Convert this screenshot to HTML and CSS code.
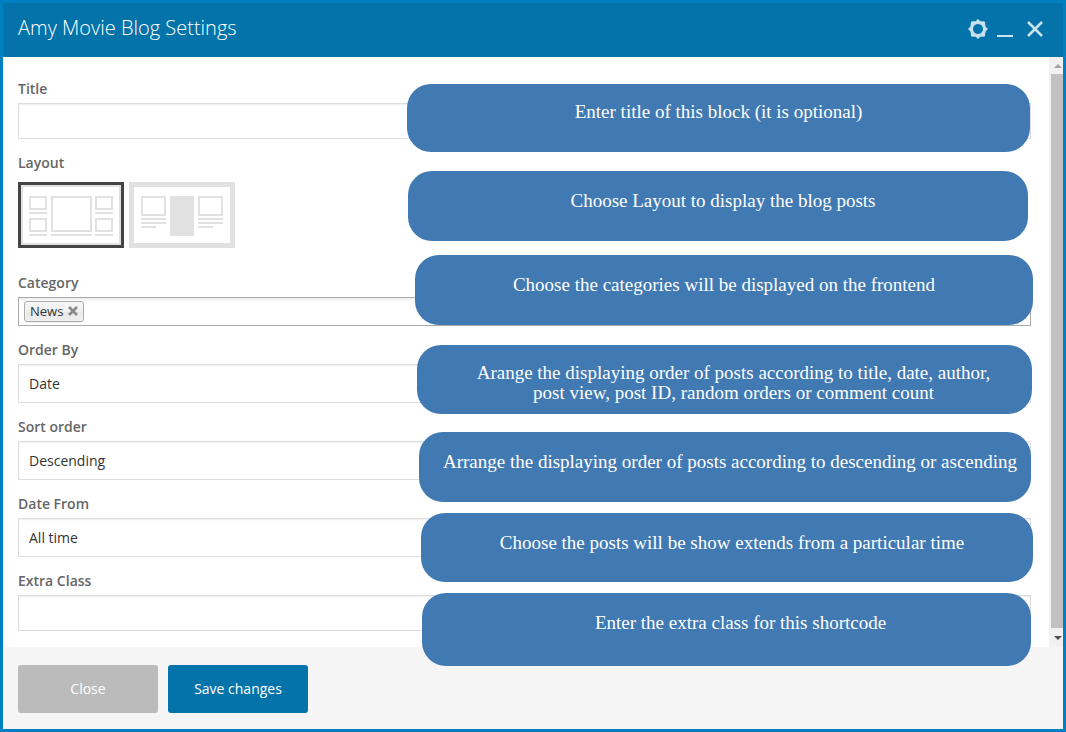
FILE: index.html
```html
<!DOCTYPE html>
<html lang="en">
<head>
<meta charset="utf-8">
<title>Amy Movie Blog Settings</title>
<link rel="stylesheet" href="styles.css">
</head>
<body>
<main class="window">
  <header class="window-header">
    <h1 class="window-title">Amy Movie Blog Settings</h1>
    <div class="window-controls">
      <button class="control" type="button" aria-label="Settings">
        <svg width="22" height="22" viewBox="0 0 22 22"><path fill="currentColor" stroke="currentColor" stroke-linejoin="round" fill-rule="evenodd" d="M11 1.500 13.300 3.800 17.500 3.900 18 8.600 20.500 11 18 13.400 17.500 18.100 13.300 18.200 11 20.500 8.700 18.200 4.500 18.100 4 13.400 1.500 11 4 8.600 4.500 3.900 8.700 3.800zM11 5.500a5.500 5.500 0 1 0 0 11 5.500 5.500 0 0 0 0-11z"/></svg>
      </button>
      <button class="control" type="button" aria-label="Minimize">
        <svg width="16" height="22" viewBox="0 0 16 22"><path fill="currentColor" d="M0 17h16v2H0z"/></svg>
      </button>
      <button class="control control-close" type="button" aria-label="Close window">
        <svg width="16" height="22" viewBox="0 0 16 22"><path fill="none" stroke="currentColor" stroke-width="2.500" d="M1 4l14 14M15 4L1 18"/></svg>
      </button>
    </div>
  </header>

  <div class="window-body">
    <form class="fields" id="settings">
      <div class="field">
        <label class="label" for="title">Title</label>
        <input class="control-box" id="title" type="text">
      </div>
      <fieldset class="field field-layout">
        <legend class="label">Layout</legend>
        <div class="layouts">
          <label class="layout">
            <input class="layout-radio" type="radio" name="layout" aria-label="Large centre post" checked>
            <svg class="layout-picture" width="106" height="66" viewBox="0 0 106 66">
              <g fill="none" stroke="#e1e1e1" stroke-width="2">
                <path d="M12 15h16v12H12zM12 37h16v12H12zM34 15h39v34H34zM78 15h16v12H78zM78 37h16v12H78z"/>
                <path d="M11 31h18M11 53h18M33 53h41M77 31h18M77 53h18"/>
              </g>
            </svg>
          </label>
          <label class="layout">
            <input class="layout-radio" type="radio" name="layout" aria-label="Three columns">
            <svg class="layout-picture" width="106" height="66" viewBox="0 0 106 66">
              <path fill="#e1e1e1" d="M41 14h24v40H41z"/>
              <g fill="none" stroke="#e1e1e1" stroke-width="2">
                <path d="M13 15h23v18H13zM70 15h23v18H70z"/>
                <path d="M12 37h25M12 41h25M12 45h15M69 37h25M69 41h25M69 45h15"/>
              </g>
            </svg>
          </label>
        </div>
      </fieldset>
      <div class="field">
        <label class="label" for="category">Category</label>
        <div class="tags">
          <span class="tag">News
            <button class="tag-remove" type="button" aria-label="Remove News"><svg width="10" height="10" viewBox="0 0 10 10"><path fill="none" stroke="currentColor" stroke-width="2.500" d="M1 1l8 8M9 1L1 9"/></svg></button>
          </span>
          <input class="tags-input" id="category" type="text">
        </div>
      </div>
      <div class="field">
        <label class="label" for="order">Order By</label>
        <select class="control-box control-select" id="order"><option>Date</option></select>
      </div>
      <div class="field">
        <label class="label" for="sort">Sort order</label>
        <select class="control-box control-select" id="sort"><option>Descending</option></select>
      </div>
      <div class="field">
        <label class="label" for="from">Date From</label>
        <select class="control-box control-select" id="from"><option>All time</option></select>
      </div>
      <div class="field">
        <label class="label" for="extra">Extra Class</label>
        <input class="control-box" id="extra" type="text">
      </div>
    </form>
    <div class="scrollbar" aria-hidden="true">
      <svg class="scroll-arrow" width="14" height="17" viewBox="0 0 14 17"><path fill="#a3a3a3" d="M5 11l4-4 4 4z"/></svg>
      <div class="scroll-thumb"></div>
      <svg class="scroll-arrow" width="14" height="19" viewBox="0 0 14 19"><path fill="#505050" d="M5 8h8l-4 4z"/></svg>
    </div>
  </div>

  <footer class="window-footer">
    <button class="button button-close" type="button">Close</button>
    <button class="button button-save" type="submit" form="settings">Save changes</button>
  </footer>

  <p class="callout callout-title">Enter title of this block (it is optional)</p>
  <p class="callout callout-layout">Choose Layout to display the blog posts</p>
  <p class="callout callout-category">Choose the categories will be displayed on the frontend</p>
  <p class="callout callout-order">Arange the displaying order of posts according to title, date, author,<br>post view, post ID, random orders or comment count</p>
  <p class="callout callout-sort">Arrange the displaying order of posts according to descending or ascending</p>
  <p class="callout callout-from">Choose the posts will be show extends from a particular time</p>
  <p class="callout callout-extra">Enter the extra class for this shortcode</p>
</main>
</body>
</html>
```
FILE: styles.css
```css
* { box-sizing: border-box; }

body {
  margin: 0;
  font-family: "Open Sans", "Noto Sans", sans-serif;
  font-size: 14px;
  line-height: 20px;
  color: #333;
}

button, input, select { font: inherit; color: inherit; }

.window {
  position: relative;
  display: flex;
  flex-direction: column;
  min-height: 100vh;
  border: 3px solid #0080c1;
  background: #fff;
}

.window-header {
  display: flex;
  align-items: center;
  justify-content: space-between;
  padding: 10px 20px 14px 15px;
  background: #0473aa;
  color: #fff;
}

.window-title {
  margin: 0;
  font-size: 20px;
  font-weight: 300;
  line-height: 30px;
}

.window-controls {
  display: flex;
  align-items: center;
  gap: 8px;
  padding-top: 2px;
  color: #cce3ee;
}

.control {
  display: flex;
  padding: 0;
  border: 0;
  background: none;
}

.control-close { margin-left: 6px; }

.window-body {
  display: flex;
  flex: 1;
}

.fields {
  display: flex;
  flex: 1;
  flex-direction: column;
  gap: 14px;
  min-width: 0;
  padding: 22px 18px 16px 15px;
}

.field {
  display: flex;
  flex-direction: column;
  gap: 4px;
  min-width: 0;
  margin: 0;
  padding: 0;
  border: 0;
}

.field-layout { display: block; padding-bottom: 11px; }

.label {
  padding: 0;
  font-weight: 600;
  color: #666;
}

.control-box {
  width: 100%;
  height: 36px;
  padding: 0 10px;
  border: 1px solid #ddd;
  border-radius: 0;
  background: #fff;
  box-shadow: inset 0 1px 2px rgba(0, 0, 0, 0.07);
}

.control-select {
  height: 39px;
  appearance: none;
}

.layouts {
  display: flex;
  gap: 5px;
  padding-top: 9px;
}

.layout { display: block; position: relative; }

.layout-radio {
  position: absolute;
  inset: 0;
  width: 100%;
  height: 100%;
  margin: 0;
  opacity: 0;
}

.layout-picture {
  display: block;
  box-shadow: inset 0 0 0 5px #e1e1e1;
}

.layout-radio:checked + .layout-picture {
  box-shadow: inset 0 0 0 3px #444, inset 0 0 0 5px #e1e1e1;
}

.tags {
  display: flex;
  gap: 5px;
  padding: 3px 5px;
  border: 1px solid #aaa;
  background: linear-gradient(#eee 1%, #fff 15%);
}

.tag {
  display: flex;
  align-items: center;
  gap: 5px;
  height: 21px;
  padding: 0 5px 1px;
  border: 1px solid #aaa;
  border-radius: 3px;
  background: linear-gradient(#f4f4f4 20%, #f0f0f0 50%, #e8e8e8 52%, #eee);
  box-shadow: inset 0 0 2px #fff, 0 1px 0 rgba(0, 0, 0, 0.05);
  font-size: 13px;
}

.tag-remove {
  display: flex;
  padding: 0;
  border: 0;
  background: none;
  color: #888;
}

.tags-input {
  flex: 1;
  min-width: 0;
  height: 21px;
  padding: 0;
  border: 0;
  background: none;
}

.scrollbar {
  display: flex;
  flex-direction: column;
  width: 14px;
  background: #f1f1f1;
}

.scroll-arrow { display: block; }

.scroll-thumb {
  flex: 1;
  margin-left: 2px;
  background: #c1c1c1;
}

.window-footer {
  display: flex;
  gap: 10px;
  padding: 18px 15px 16px;
  background: #f5f5f5;
}

.button {
  width: 140px;
  height: 48px;
  border: 0;
  border-radius: 3px;
  color: #fff;
}

.button-close { background: #bbb; }
.button-save { background: #0473aa; }

/* Help notes floating over the form */
.callout {
  position: absolute;
  height: 70px;
  margin: 0;
  padding-top: 20px;
  border-radius: 24px;
  background: #4179b2;
  color: #fff;
  font-family: "Liberation Serif", "Times New Roman", serif;
  font-size: 19px;
  text-align: center;
}

.callout-title { top: 81px; left: 404px; right: 33px; height: 68px; padding-top: 18px; }
.callout-layout { top: 168px; left: 405px; right: 35px; padding-left: 10px; }
.callout-category { top: 252px; left: 412px; right: 30px; }
.callout-order { top: 342px; left: 414px; right: 31px; height: 69px; padding-top: 18px; padding-left: 18px; }
.callout-sort { top: 429px; left: 416px; right: 32px; padding-left: 10px; }
.callout-from { top: 510px; left: 418px; right: 30px; height: 69px; padding-left: 10px; }
.callout-extra { top: 590px; left: 419px; right: 32px; height: 73px; padding-left: 28px; }
```
